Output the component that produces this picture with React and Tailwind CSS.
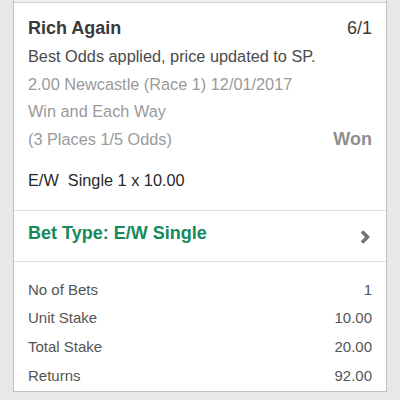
export default function App() {
  const rows = [
    ["No of Bets", "1"],
    ["Unit Stake", "10.00"],
    ["Total Stake", "20.00"],
    ["Returns", "92.00"],
  ];

  return (
    <div
      className="h-[400px] w-[400px] overflow-hidden bg-[#e8e8e8]"
      style={{ fontFamily: '"Liberation Sans", Arial, sans-serif' }}
    >
      <div className="mx-[13px] border-x border-b border-[#c2c2c2] bg-white">
        <div className="h-[2px] bg-[#eeeeee]" />

        {/* selection */}
        <div className="border-t border-[#d4d4d4] pl-[14px] pr-[14px] pt-[12px] pb-[16px]">
          <div className="flex items-center justify-between text-[18px] leading-[27.75px] text-[#3a3a3a]">
            <span className="font-bold">Rich Again</span>
            <span>6/1</span>
          </div>
          <div className="text-[16.3px] leading-[27.75px] text-[#4a4a4a]">
            Best Odds applied, price updated to SP.
          </div>
          <div className="text-[16.3px] leading-[27.75px] text-[#9a9a9a]">
            2.00 Newcastle (Race 1) 12/01/2017
          </div>
          <div className="text-[16.3px] leading-[27.75px] text-[#9a9a9a]">Win and Each Way</div>
          <div className="flex items-center justify-between leading-[27.75px]">
            <span className="text-[16.3px] text-[#9a9a9a]">(3 Places 1/5 Odds)</span>
            <span className="text-[18px] font-bold text-[#8e8e8e]">Won</span>
          </div>
          <div className="mt-[12px] whitespace-pre text-[16.3px] leading-[28px] text-[#2a2a2a]">
            E/W  Single 1 x 10.00
          </div>
        </div>

        {/* bet type */}
        <div className="flex items-center justify-between border-t border-[#dcdcdc] pl-[14px] pr-[16px] pt-[8px] pb-[14px]">
          <span className="text-[18px] font-bold leading-[28px] text-[#168a5c]">
            Bet Type: E/W Single
          </span>
          <svg width="10" height="14" viewBox="0 0 10 14" className="mt-[8px]">
            <polyline
              points="2,1.5 7.5,7 2,12.5"
              fill="none"
              stroke="#727272"
              strokeWidth="3.5"
            />
          </svg>
        </div>

        {/* summary */}
        <div className="border-t border-[#dcdcdc] pl-[14px] pr-[14px] pt-[14px] text-[15px] leading-[28.7px] text-[#555555]">
          {rows.map(([label, value]) => (
            <div key={label} className="flex justify-between">
              <span>{label}</span>
              <span>{value}</span>
            </div>
          ))}
        </div>
      </div>
    </div>
  );
}
